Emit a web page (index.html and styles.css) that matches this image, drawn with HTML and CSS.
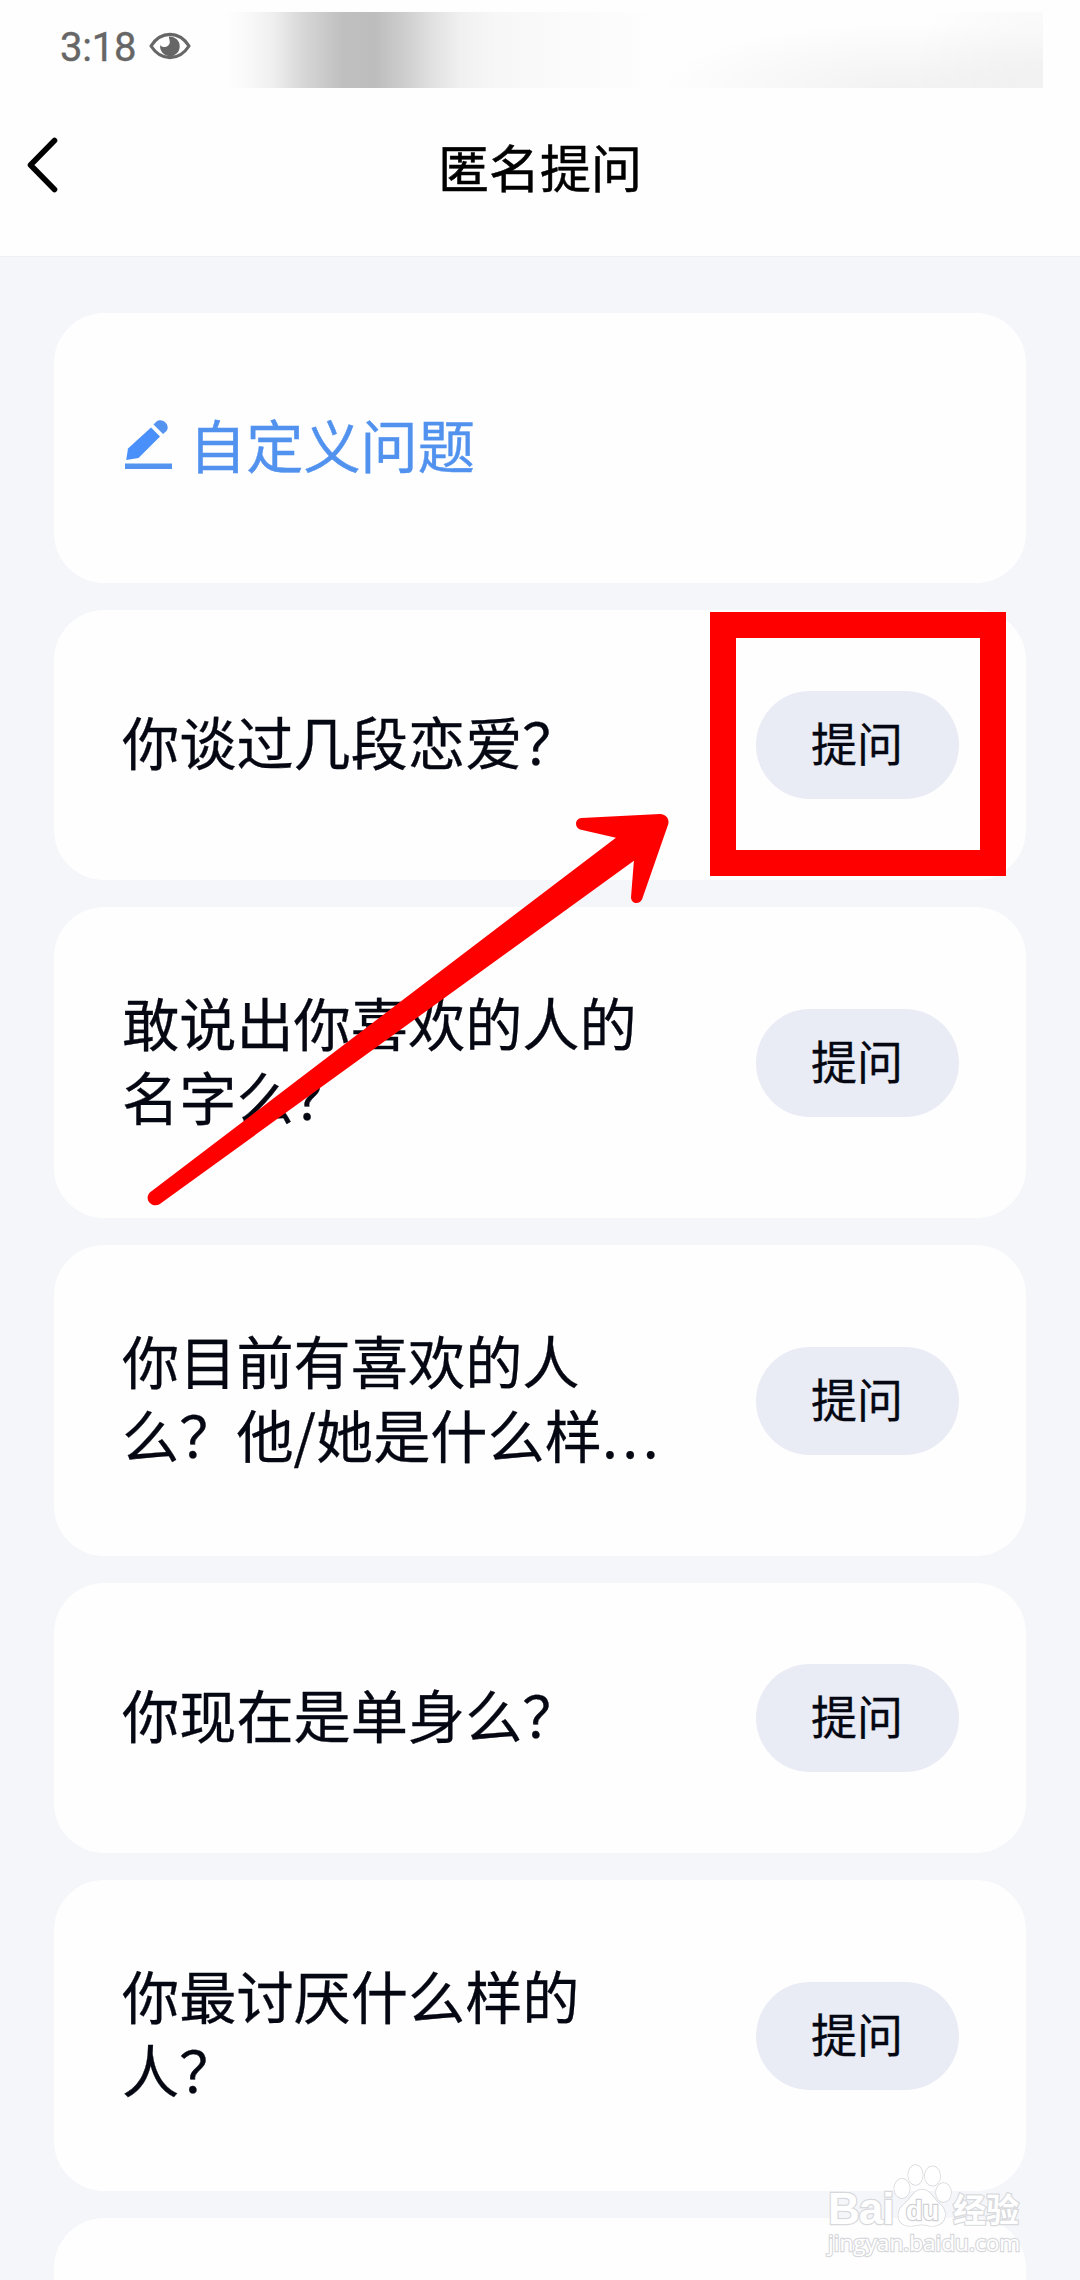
FILE: index.html
```html
<!DOCTYPE html>
<html lang="zh-CN">
<head>
<meta charset="utf-8">
<title>匿名提问</title>
<link rel="stylesheet" href="styles.css">
</head>
<body>
<div class="screen">
  <header class="header">
    <div class="status">
      <span class="clock">3:18</span>
      <svg class="eye" viewBox="0 0 42 28" width="42" height="28"><path d="M2 14C12-1.500 30-1.500 40 14C30 29.500 12 29.500 2 14Z" fill="none" stroke="#666" stroke-width="3.200" stroke-linejoin="round"/><path d="M20 4.600A9.800 9.800 0 1 1 11.200 13C13.500 16.500 20.500 15.500 20.800 10C20.800 7.500 19.500 6 20 4.600Z" fill="#666"/></svg>
      <div class="smudge"></div>
    </div>
    <nav class="nav">
      <svg class="back" viewBox="0 0 32 56" width="32" height="56"><path d="M28.500 3.500L4.500 28L28.500 52.500" fill="none" stroke="#000" stroke-width="5.600" stroke-linecap="round" stroke-linejoin="round"/></svg>
      <h1 class="title">匿名提问</h1>
    </nav>
  </header>
  <main class="list">
    <section class="card custom">
      <svg class="pencil" viewBox="0 0 48 52" width="48" height="52"><path d="M26 8.500L35 17.500L13.500 39L1.200 41L3 29.500Z" fill="#4a90fb"/><path d="M28.500 5.500L31.500 2.500C37-2 46 6 41.500 12L38 15Z" fill="#5493ef"/><path d="M0 44.500H47V50H0Z" fill="#5493ef"/></svg>
      <span>自定义问题</span>
    </section>
    <section class="card"><p class="question">你谈过几段恋爱？</p><button class="ask">提问</button></section>
    <section class="card tall"><p class="question">敢说出你喜欢的人的<br>名字么？</p><button class="ask">提问</button></section>
    <section class="card tall"><p class="question">你目前有喜欢的人<br>么？他/她是什么样<span class="dots">...</span></p><button class="ask">提问</button></section>
    <section class="card"><p class="question">你现在是单身么？</p><button class="ask">提问</button></section>
    <section class="card tall"><p class="question">你最讨厌什么样的<br>人？</p><button class="ask">提问</button></section>
    <section class="card"></section>
  </main>

  <div class="highlight"></div>
  <svg class="arrow" viewBox="140 800 540 420" width="540" height="420"><path d="M149.800 1192.500L615.900 837.700L580 829.500C574 827 575 818.500 581.500 818L660 814C666 814 669.500 819 668.300 824L642 899.500C639 905 631.500 904 631 897.500L633.900 860.700L159.500 1204.300C152 1208.500 143.500 1199.500 149.800 1192.500Z" fill="#f00"/></svg>

  <div class="watermark">
    <div class="mark-row">
      <span class="mark-bai">Bai</span>
      <svg class="paw" viewBox="0 0 60 64" width="60" height="64"><g fill="#fff" stroke="#d6d7da" stroke-width="1.400"><ellipse cx="9" cy="24.500" rx="7.700" ry="9.700"/><ellipse cx="22.500" cy="11" rx="7.300" ry="10"/><ellipse cx="39.500" cy="12" rx="7.700" ry="9.700"/><ellipse cx="50.500" cy="28.500" rx="7.500" ry="9.500"/><path d="M29 25.500C37 25.500 40 34 46 39.500C55 46 54 59 43 61.500C37 63 34 60.500 29 60.500C23 60.500 19 63 13.500 61.500C3 59 3 46 12 39.500C18 34 21 25.500 29 25.500Z"/></g><text x="29.500" y="56" text-anchor="middle" class="du">du</text></svg>
      <span class="mark-cn">经验</span>
    </div>
    <div class="mark-url">jingyan.baidu.com</div>
  </div>
</div>
</body>
</html>
```
FILE: styles.css
```css
* { box-sizing: border-box; }
body { margin: 0; background: #f5f6fa; font-family: "Noto Sans CJK SC", sans-serif; }
.screen { position: relative; width: 1080px; height: 2280px; overflow: hidden; }
.header { height: 257px; background: #fefefe; border-bottom: 1px solid #eef0f4; }
.status { display: flex; align-items: flex-start; height: 88px; padding: 12px 37px 0 60px; }
.clock { width: 89px; padding-top: 12px; font: 40px/48px Roboto, sans-serif; color: #666; white-space: nowrap; letter-spacing: -0.2px; -webkit-text-stroke: 0.4px #666; }
.eye { flex: none; margin-top: 20px; }
.smudge {
  flex: none; width: 818px; height: 76px; margin-left: 34px;
  background:
    radial-gradient(ellipse 250px 70px at 680px 80px, rgba(0,0,0,.05), transparent),
    radial-gradient(ellipse 130px 110px at 818px 55px, rgba(0,0,0,.03), transparent),
    linear-gradient(90deg, #fefefe 0, #fafafa 20px, #efefef 48px, #d7d7d7 78px, #bfbfbf 118px, #bdbdbd 150px, #cecece 180px, #e1e1e1 208px, #f0f0f0 235px, #f7f7f7 270px, #fafafa 330px, #fcfcfc 390px, #fefefe 430px);
}
.nav { display: grid; grid-template-columns: 60px 1fr 60px; align-items: center; height: 154px; padding: 0 26px; }
.title { margin: 1px 0 0; text-align: center; font-size: 51px; line-height: 74px; font-weight: 400; color: #000; -webkit-text-stroke: 0.5px #000; }
.list { display: flex; flex-direction: column; gap: 27px; padding: 56px 54px 0; }
.card { display: flex; flex: none; align-items: center; justify-content: space-between; height: 270px; padding: 0 67px 0 68px; border-radius: 50px; background: #fefefe; }
.card.tall { height: 311px; }
.card.custom { justify-content: flex-start; gap: 16px; padding-left: 71px; font-size: 57.2px; line-height: 74px; color: #5292ef; -webkit-text-stroke: 0.4px #5292ef; }
.card.custom span { margin-top: -11px; }
.pencil { flex: none; margin-top: -6px; }
.question { margin: -10px 0 0; font-size: 57.2px; line-height: 74px; color: #050813; white-space: nowrap; -webkit-text-stroke: 0.3px #050813; }
.dots { letter-spacing: 4.5px; }
.ask { flex: none; width: 203px; height: 108px; padding: 0 1px 8px 0; border: 0; border-radius: 54px; background: #e9ecf5; font: 46px/68px "Noto Sans CJK SC", sans-serif; color: #050813; -webkit-text-stroke: 0.3px #050813; }
.highlight { position: absolute; left: 710px; top: 612px; width: 296px; height: 264px; border: 26px solid #f00; }
.arrow { position: absolute; left: 140px; top: 800px; }
.watermark { position: absolute; left: 828px; top: 2164px; color: #fff; -webkit-text-stroke: 2.4px #d8d9dc; paint-order: stroke fill; }
.mark-row { display: flex; align-items: flex-end; height: 64px; }
.mark-bai { width: 65px; font: bold 44px/38px "Liberation Sans", sans-serif; letter-spacing: -1px; white-space: nowrap; }
.paw { flex: none; }
.du { font: bold 27px "Liberation Sans", sans-serif; fill: #fff; stroke: #cfd0d3; stroke-width: 2.4px; paint-order: stroke fill; }
.mark-cn { font-size: 33px; line-height: 40px; font-weight: 700; white-space: nowrap; }
.mark-url { font: 22.6px/30px "Open Sans", sans-serif; white-space: nowrap; }
```
